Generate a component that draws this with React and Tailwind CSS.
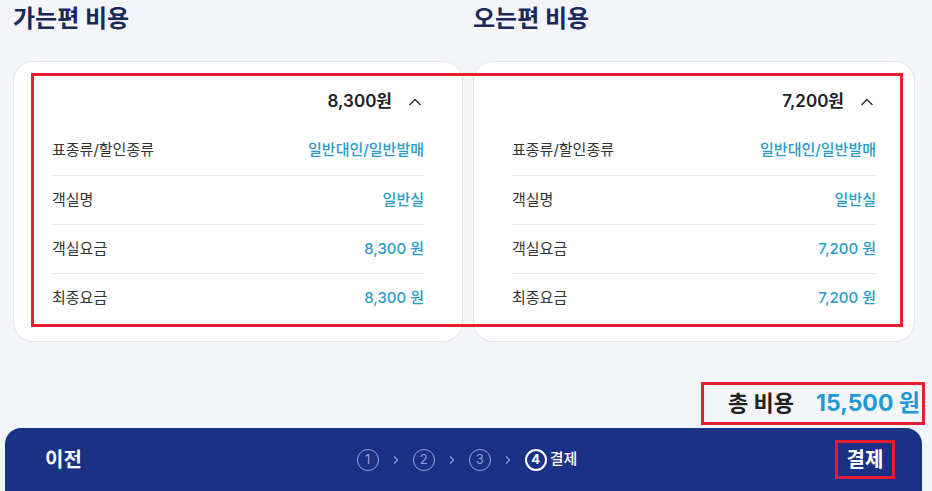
import React from 'react';

const FONT = { fontFamily: 'Inter, "Noto Sans CJK KR", "Noto Sans", sans-serif' };

const rows = (fare) => [
  { label: '표종류/할인종류', value: '일반대인/일반발매' },
  { label: '객실명', value: '일반실' },
  { label: '객실요금', value: `${fare} 원` },
  { label: '최종요금', value: `${fare} 원` },
];

function FareCard({ fare, width }) {
  return (
    <div className={`${width} rounded-[20px] border border-[#dfe3ea] bg-white px-[38px] pt-[24px] pb-[19px]`}>
      <div className="flex h-[32px] items-center justify-end gap-[16px] pr-[2px]">
        <span className="text-[17px] font-semibold text-[#222]">{fare}원</span>
        <svg width="14" height="10" viewBox="0 0 14 10" fill="none">
          <polyline points="1.5,8 7,2.5 12.5,8" stroke="#333" strokeWidth="1.5" />
        </svg>
      </div>
      <div className="mt-[8px]">
        {rows(fare).map((r, i) => (
          <div
            key={r.label}
            className={`flex h-[49px] items-center justify-between ${i > 0 ? 'border-t border-[#e6e8ec]' : ''}`}
          >
            <span className="text-[15px] text-[#333]">{r.label}</span>
            <span className="text-[15px] font-medium text-[#2a9ac6]">{r.value}</span>
          </div>
        ))}
      </div>
    </div>
  );
}

function Step({ n, active }) {
  return (
    <span
      className={`flex h-[22px] w-[22px] items-center justify-center rounded-full ${
        active ? 'border-2 border-white text-[13px] font-bold text-white' : 'border border-[#8e9fd6] text-[13px] text-[#8e9fd6]'
      }`}
    >
      {n}
    </span>
  );
}

function Arrow() {
  return (
    <svg width="8" height="10" viewBox="0 0 8 10" fill="none" className="mx-[13px]">
      <polyline points="2,1.5 5.5,5 2,8.5" stroke="#8e9fd6" strokeWidth="1.2" />
    </svg>
  );
}

export default function App() {
  return (
    <div style={FONT} className="h-[491px] w-[932px] overflow-hidden bg-[#f3f5f8]">
      <div className="px-[13px]">
        <div className="flex gap-[10px]">
          <h2 className="w-[450px] text-[24px] font-bold leading-[38px] text-[#1c2858]">가는편 비용</h2>
          <h2 className="w-[442px] text-[24px] font-bold leading-[38px] text-[#1c2858]">오는편 비용</h2>
        </div>
        <div className="relative mt-[23px] flex gap-[10px]">
          <FareCard fare="8,300" width="w-[450px]" />
          <FareCard fare="7,200" width="w-[442px]" />
          <div className="pointer-events-none absolute left-[18px] top-[12px] h-[254px] w-[872px] border-[3px] border-[#e5202e]" />
        </div>
      </div>

      <div className="mt-[40px] flex justify-end pr-[7px]">
        <div className="flex h-[43px] items-center gap-[22px] border-[3px] border-[#e5202e] pl-[24px] pr-[2px]">
          <span className="text-[22px] font-bold text-[#222]">총 비용</span>
          <span className="text-[23px] font-bold text-[#1b9ad6]">15,500 원</span>
        </div>
      </div>

      <div className="mx-[5px] mt-[3px] flex h-[70px] w-[917px] items-start rounded-t-[16px] bg-[#1b3186] pt-[12px]">
        <div className="flex h-[39px] flex-1 items-center pl-[40px]">
          <span className="text-[20px] font-bold text-white">이전</span>
        </div>
        <div className="flex h-[39px] items-center pr-[6px]">
          <Step n="1" />
          <Arrow />
          <Step n="2" />
          <Arrow />
          <Step n="3" />
          <Arrow />
          <Step n="4" active />
          <span className="ml-[3px] text-[15px] font-medium text-white">결제</span>
        </div>
        <div className="flex flex-1 justify-end pr-[27px]">
          <div className="flex h-[39px] w-[60px] items-center justify-center border-[3px] border-[#e5202e]">
            <span className="text-[20px] font-bold text-white">결제</span>
          </div>
        </div>
      </div>
    </div>
  );
}
